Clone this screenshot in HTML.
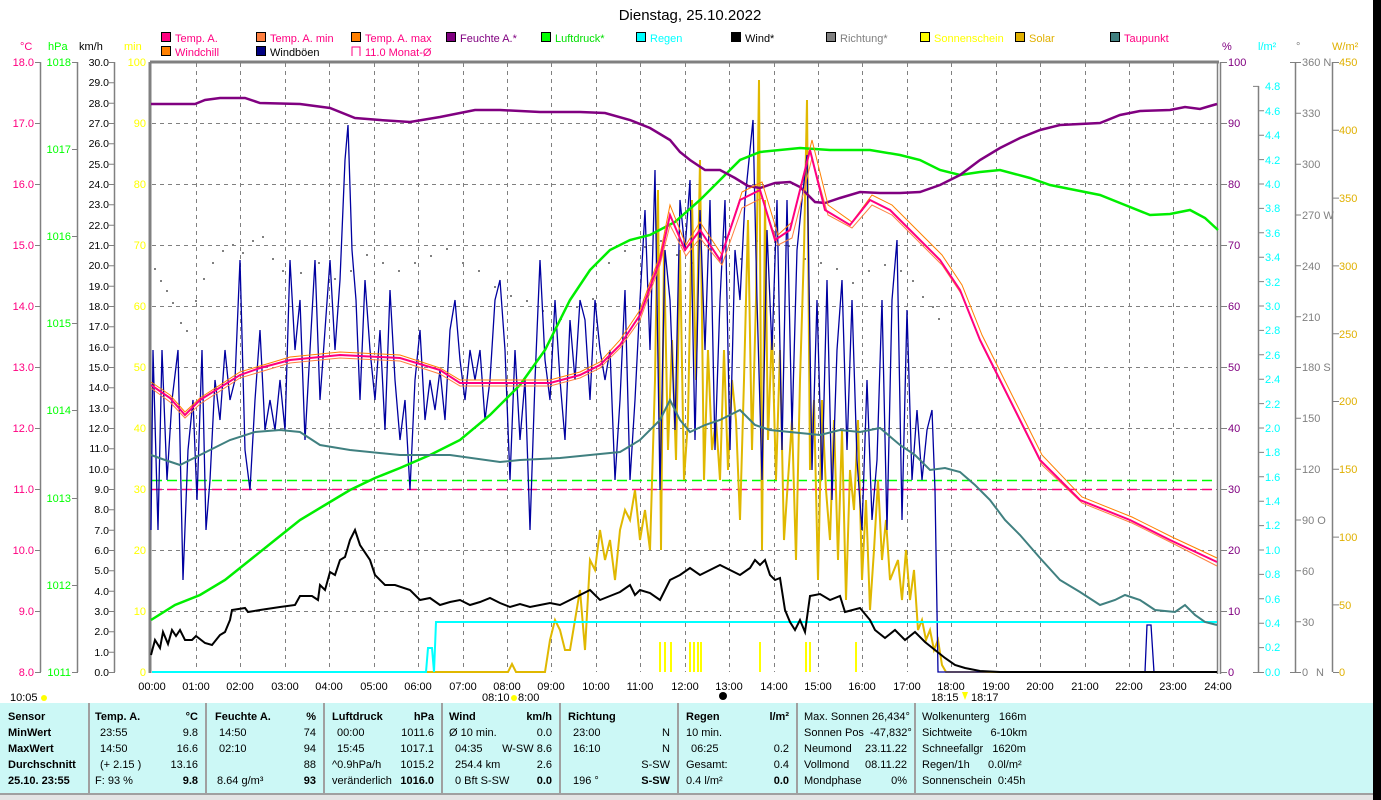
<!DOCTYPE html>
<html><head><meta charset="utf-8"><style>
body{margin:0;width:1381px;height:800px;overflow:hidden;background:#fff;font-family:"Liberation Sans",sans-serif;position:relative}
svg{position:absolute;left:0;top:0}
#panel{position:absolute;left:0;top:703px;width:1373px;height:90px;background:#ccf8f6}
.col{position:absolute;top:0;height:90px;border-left:2px solid #a0a0a0;box-sizing:border-box}
.r{position:absolute;font-size:11px;line-height:16px;white-space:nowrap;color:#000}
.b{font-weight:bold}
#black{position:absolute;left:1373px;top:0;width:8px;height:800px;background:#000}
#status{position:absolute;left:0;top:793px;width:1373px;height:7px;background:#e4e4e4;border-top:2px solid #a0a0a0;box-sizing:border-box}
</style></head><body>
<svg width="1373" height="703" font-family="Liberation Sans, sans-serif" font-size="11">
<text x="690" y="20" font-size="15" text-anchor="middle">Dienstag, 25.10.2022</text>
<g stroke="#000" stroke-width="1">
<rect x="161.5" y="32.5" width="9" height="9" fill="#ff0080"/>
<rect x="256.5" y="32.5" width="9" height="9" fill="#ff8040"/>
<rect x="351.5" y="32.5" width="9" height="9" fill="#ff8000"/>
<rect x="446.5" y="32.5" width="9" height="9" fill="#800080"/>
<rect x="541.5" y="32.5" width="9" height="9" fill="#00ff00"/>
<rect x="636.5" y="32.5" width="9" height="9" fill="#00ffff"/>
<rect x="731.5" y="32.5" width="9" height="9" fill="#000"/>
<rect x="826.5" y="32.5" width="9" height="9" fill="#808080"/>
<rect x="920.5" y="32.5" width="9" height="9" fill="#ffff00"/>
<rect x="1015.5" y="32.5" width="9" height="9" fill="#e0b000"/>
<rect x="1110.5" y="32.5" width="9" height="9" fill="#408080"/>
<rect x="161.5" y="46.5" width="9" height="9" fill="#ff8000"/>
<rect x="256.5" y="46.5" width="9" height="9" fill="#000080"/>
</g>
<path d="M352 56V47H360V56" fill="none" stroke="#ff0080"/>
<g>
<text x="175" y="42" fill="#ff0080">Temp. A.</text>
<text x="270" y="42" fill="#ff0080">Temp. A. min</text>
<text x="365" y="42" fill="#ff0080">Temp. A. max</text>
<text x="460" y="42" fill="#800080">Feuchte A.*</text>
<text x="555" y="42" fill="#00e000">Luftdruck*</text>
<text x="650" y="42" fill="#00ffff">Regen</text>
<text x="745" y="42" fill="#000">Wind*</text>
<text x="840" y="42" fill="#808080">Richtung*</text>
<text x="934" y="42" fill="#ffff00">Sonnenschein</text>
<text x="1029" y="42" fill="#e0b000">Solar</text>
<text x="1124" y="42" fill="#ff0080">Taupunkt</text>
<text x="175" y="56" fill="#ff0080">Windchill</text>
<text x="270" y="56" fill="#000">Windböen</text>
<text x="365" y="56" fill="#ff0080">11.0 Monat-Ø</text>
</g>
<text x="20" y="50" fill="#ff0080">°C</text>
<text x="48" y="50" fill="#00ff00">hPa</text>
<text x="79" y="50" fill="#000">km/h</text>
<text x="124" y="50" fill="#ffff00">min</text>
<text x="1222" y="50" fill="#800080">%</text>
<text x="1258" y="50" fill="#00ffff">l/m²</text>
<text x="1296" y="50" fill="#808080">°</text>
<text x="1332" y="50" fill="#e0b000">W/m²</text>
<g stroke="#808080" stroke-dasharray="4,4" stroke-width="1">
<path d="M152 123.5H1217M152 184.5H1217M152 245.5H1217M152 306.5H1217M152 367.5H1217M152 428.5H1217M152 489.5H1217M152 550.5H1217M152 611.5H1217"/>
<path d="M196.5 63V672M240.5 63V672M285.5 63V672M329.5 63V672M374.5 63V672M418.5 63V672M463.5 63V672M507.5 63V672M551.5 63V672M596.5 63V672M640.5 63V672M685.5 63V672M729.5 63V672M774.5 63V672M818.5 63V672M862.5 63V672M907.5 63V672M951.5 63V672M996.5 63V672M1040.5 63V672M1085.5 63V672M1129.5 63V672M1173.5 63V672"/>
</g>
<g stroke="#808080" fill="none">
<path d="M150 62V673" stroke-width="3"/>
<path d="M150 62H1219" stroke-width="3"/>
<path d="M1217.5 62V674M1220.5 62V674" stroke-width="1.5"/>
<path d="M40.5 62V672M77.5 62V672M114.5 62V672M1258.5 86V672M1295.5 62V672M1332.5 62V672" stroke-width="1.5"/>
</g>
<g stroke="#808080">
<path d="M35 62.5H41M35 123.5H41M35 184.5H41M35 245.5H41M35 306.5H41M35 367.5H41M35 428.5H41M35 489.5H41M35 550.5H41M35 611.5H41M35 672.5H41"/>
<path d="M72 62.5H78M72 149.5H78M72 236.5H78M72 323.5H78M72 410.5H78M72 498.5H78M72 585.5H78M72 672.5H78"/>
<path d="M109 62.5H115M109 82.8H115M109 103.2H115M109 123.5H115M109 143.8H115M109 164.2H115M109 184.5H115M109 204.8H115M109 225.2H115M109 245.5H115M109 265.8H115M109 286.2H115M109 306.5H115M109 326.8H115M109 347.2H115M109 367.5H115M109 387.8H115M109 408.2H115M109 428.5H115M109 448.8H115M109 469.2H115M109 489.5H115M109 509.8H115M109 530.2H115M109 550.5H115M109 570.8H115M109 591.2H115M109 611.5H115M109 631.8H115M109 652.2H115M109 672.5H115"/>
<path d="M1221 62.5H1227M1221 123.5H1227M1221 184.5H1227M1221 245.5H1227M1221 306.5H1227M1221 367.5H1227M1221 428.5H1227M1221 489.5H1227M1221 550.5H1227M1221 611.5H1227M1221 672.5H1227"/>
<path d="M1253 86.4H1259M1259 110.8H1264M1259 135.2H1264M1259 159.6H1264M1259 184H1264M1259 208.4H1264M1259 232.8H1264M1259 257.2H1264M1259 281.6H1264M1259 306H1264M1259 330.4H1264M1259 354.8H1264M1259 379.2H1264M1259 403.6H1264M1259 428H1264M1259 452.4H1264M1259 476.8H1264M1259 501.2H1264M1259 525.6H1264M1259 550H1264M1259 574.4H1264M1259 598.8H1264M1259 623.2H1264M1259 647.6H1264M1253 672.5H1264"/>
<path d="M1290 62.5H1301M1296 113.3H1301M1296 164.2H1301M1296 215H1301M1296 265.8H1301M1296 316.7H1301M1296 367.5H1301M1296 418.3H1301M1296 469.2H1301M1296 520H1301M1296 570.8H1301M1296 621.7H1301M1290 672.5H1301"/>
<path d="M1333 62.5H1339M1333 130.3H1339M1333 198.1H1339M1333 265.9H1339M1333 333.7H1339M1333 401.5H1339M1333 469.3H1339M1333 537.1H1339M1333 604.9H1339M1333 672.5H1339"/>
</g>
<g fill="#ff0080" text-anchor="end">
<text x="34" y="66">18.0</text><text x="34" y="127">17.0</text><text x="34" y="188">16.0</text><text x="34" y="249">15.0</text><text x="34" y="310">14.0</text><text x="34" y="371">13.0</text><text x="34" y="432">12.0</text><text x="34" y="493">11.0</text><text x="34" y="554">10.0</text><text x="34" y="615">9.0</text><text x="34" y="676">8.0</text>
</g>
<g fill="#00ff00" text-anchor="end">
<text x="71" y="66">1018</text><text x="71" y="153">1017</text><text x="71" y="240">1016</text><text x="71" y="327">1015</text><text x="71" y="414">1014</text><text x="71" y="502">1013</text><text x="71" y="589">1012</text><text x="71" y="676">1011</text>
</g>
<g fill="#000" text-anchor="end" font-size="10.5">
<text x="109" y="66">30.0</text><text x="109" y="86">29.0</text><text x="109" y="107">28.0</text><text x="109" y="127">27.0</text><text x="109" y="147">26.0</text><text x="109" y="168">25.0</text><text x="109" y="188">24.0</text><text x="109" y="208">23.0</text><text x="109" y="229">22.0</text><text x="109" y="249">21.0</text><text x="109" y="269">20.0</text><text x="109" y="290">19.0</text><text x="109" y="310">18.0</text><text x="109" y="330">17.0</text><text x="109" y="351">16.0</text><text x="109" y="371">15.0</text><text x="109" y="391">14.0</text><text x="109" y="412">13.0</text><text x="109" y="432">12.0</text><text x="109" y="452">11.0</text><text x="109" y="473">10.0</text><text x="109" y="493">9.0</text><text x="109" y="513">8.0</text><text x="109" y="534">7.0</text><text x="109" y="554">6.0</text><text x="109" y="574">5.0</text><text x="109" y="595">4.0</text><text x="109" y="615">3.0</text><text x="109" y="635">2.0</text><text x="109" y="656">1.0</text><text x="109" y="676">0.0</text>
</g>
<g fill="#ffff00" text-anchor="end">
<text x="146" y="66">100</text><text x="146" y="127">90</text><text x="146" y="188">80</text><text x="146" y="249">70</text><text x="146" y="310">60</text><text x="146" y="371">50</text><text x="146" y="432">40</text><text x="146" y="493">30</text><text x="146" y="554">20</text><text x="146" y="615">10</text><text x="146" y="676">0</text>
</g>
<g fill="#800080">
<text x="1228" y="66">100</text><text x="1228" y="127">90</text><text x="1228" y="188">80</text><text x="1228" y="249">70</text><text x="1228" y="310">60</text><text x="1228" y="371">50</text><text x="1228" y="432">40</text><text x="1228" y="493">30</text><text x="1228" y="554">20</text><text x="1228" y="615">10</text><text x="1228" y="676">0</text>
</g>
<g fill="#00ffff">
<text x="1265" y="90">4.8</text><text x="1265" y="115">4.6</text><text x="1265" y="139">4.4</text><text x="1265" y="164">4.2</text><text x="1265" y="188">4.0</text><text x="1265" y="212">3.8</text><text x="1265" y="237">3.6</text><text x="1265" y="261">3.4</text><text x="1265" y="286">3.2</text><text x="1265" y="310">3.0</text><text x="1265" y="334">2.8</text><text x="1265" y="359">2.6</text><text x="1265" y="383">2.4</text><text x="1265" y="408">2.2</text><text x="1265" y="432">2.0</text><text x="1265" y="456">1.8</text><text x="1265" y="481">1.6</text><text x="1265" y="505">1.4</text><text x="1265" y="529">1.2</text><text x="1265" y="554">1.0</text><text x="1265" y="578">0.8</text><text x="1265" y="603">0.6</text><text x="1265" y="627">0.4</text><text x="1265" y="651">0.2</text><text x="1265" y="676">0.0</text>
</g>
<g fill="#808080">
<text x="1302" y="66">360 N</text><text x="1302" y="117">330</text><text x="1302" y="168">300</text><text x="1302" y="219">270 W</text><text x="1302" y="270">240</text><text x="1302" y="321">210</text><text x="1302" y="371">180 S</text><text x="1302" y="422">150</text><text x="1302" y="473">120</text><text x="1302" y="524">90 O</text><text x="1302" y="575">60</text><text x="1302" y="626">30</text><text x="1302" y="676">0</text><text x="1316" y="676">N</text>
</g>
<g fill="#e0b000">
<text x="1339" y="66">450</text><text x="1339" y="134">400</text><text x="1339" y="202">350</text><text x="1339" y="270">300</text><text x="1339" y="338">250</text><text x="1339" y="405">200</text><text x="1339" y="473">150</text><text x="1339" y="541">100</text><text x="1339" y="609">50</text><text x="1339" y="676">0</text>
</g>
<g fill="#000" text-anchor="middle">
<text x="152" y="690">00:00</text><text x="196" y="690">01:00</text><text x="240" y="690">02:00</text><text x="285" y="690">03:00</text><text x="329" y="690">04:00</text><text x="374" y="690">05:00</text><text x="418" y="690">06:00</text><text x="463" y="690">07:00</text><text x="507" y="690">08:00</text><text x="551" y="690">09:00</text><text x="596" y="690">10:00</text><text x="640" y="690">11:00</text><text x="685" y="690">12:00</text><text x="729" y="690">13:00</text><text x="774" y="690">14:00</text><text x="818" y="690">15:00</text><text x="862" y="690">16:00</text><text x="907" y="690">17:00</text><text x="951" y="690">18:00</text><text x="996" y="690">19:00</text><text x="1040" y="690">20:00</text><text x="1085" y="690">21:00</text><text x="1129" y="690">22:00</text><text x="1173" y="690">23:00</text><text x="1218" y="690">24:00</text>
</g>
<text x="10" y="701">10:05</text><circle cx="44" cy="698" r="3" fill="#ffff00"/>
<text x="482" y="701">08:10</text><circle cx="514" cy="698" r="3" fill="#ffff00"/><text x="518" y="701">8:00</text>
<circle cx="723" cy="696" r="4" fill="#000"/>
<text x="931" y="701">18:15</text><path d="M962 692L968 692L965 700Z" fill="#ffff00"/><text x="971" y="701">18:17</text>
<path d="M152 480.5H1217" stroke="#00ff00" stroke-dasharray="10,5" stroke-width="1.5"/>
<path d="M152 489.5H1217" stroke="#ff0080" stroke-dasharray="10,5" stroke-width="1.5"/>
<g fill="#808080">
<rect x="154" y="268" width="2" height="2"/><rect x="160" y="280" width="2" height="2"/><rect x="166" y="290" width="2" height="2"/><rect x="172" y="302" width="2" height="2"/><rect x="180" y="322" width="2" height="2"/><rect x="186" y="330" width="2" height="2"/><rect x="195" y="300" width="2" height="2"/><rect x="203" y="278" width="2" height="2"/><rect x="212" y="262" width="2" height="2"/><rect x="222" y="250" width="2" height="2"/><rect x="232" y="244" width="2" height="2"/><rect x="242" y="252" width="2" height="2"/><rect x="252" y="240" width="2" height="2"/><rect x="262" y="236" width="2" height="2"/><rect x="272" y="258" width="2" height="2"/><rect x="282" y="270" width="2" height="2"/><rect x="300" y="272" width="2" height="2"/><rect x="318" y="262" width="2" height="2"/><rect x="334" y="278" width="2" height="2"/><rect x="350" y="270" width="2" height="2"/><rect x="366" y="254" width="2" height="2"/><rect x="382" y="262" width="2" height="2"/><rect x="398" y="270" width="2" height="2"/><rect x="414" y="262" width="2" height="2"/><rect x="430" y="255" width="2" height="2"/><rect x="446" y="248" width="2" height="2"/><rect x="462" y="262" width="2" height="2"/><rect x="478" y="270" width="2" height="2"/><rect x="494" y="286" width="2" height="2"/><rect x="510" y="295" width="2" height="2"/><rect x="526" y="300" width="2" height="2"/><rect x="542" y="310" width="2" height="2"/><rect x="560" y="318" width="2" height="2"/><rect x="576" y="306" width="2" height="2"/><rect x="592" y="298" width="2" height="2"/><rect x="608" y="262" width="2" height="2"/><rect x="624" y="250" width="2" height="2"/><rect x="644" y="246" width="2" height="2"/><rect x="660" y="240" width="2" height="2"/><rect x="676" y="254" width="2" height="2"/><rect x="692" y="262" width="2" height="2"/><rect x="708" y="248" width="2" height="2"/><rect x="724" y="236" width="2" height="2"/><rect x="740" y="258" width="2" height="2"/><rect x="756" y="240" width="2" height="2"/><rect x="772" y="230" width="2" height="2"/><rect x="788" y="245" width="2" height="2"/><rect x="804" y="258" width="2" height="2"/><rect x="820" y="262" width="2" height="2"/><rect x="836" y="268" width="2" height="2"/><rect x="852" y="282" width="2" height="2"/><rect x="868" y="270" width="2" height="2"/><rect x="884" y="264" width="2" height="2"/><rect x="900" y="270" width="2" height="2"/><rect x="912" y="280" width="2" height="2"/><rect x="922" y="296" width="2" height="2"/><rect x="932" y="306" width="2" height="2"/><rect x="938" y="318" width="2" height="2"/>
</g>
<polyline fill="none" stroke="#e0b800" stroke-width="2" points="152,672 508,672 512,664 516,672 545,672 550,640 555,620 560,630 565,650 570,650 575,620 580,590 585,650 590,560 595,570 600,530 605,560 610,540 615,580 620,530 625,510 630,520 635,490 640,540 645,510 650,550 655,380 658,190 661,550 664,250 668,450 672,340 676,460 680,250 684,480 688,420 692,200 696,380 700,160 704,480 708,350 712,450 716,420 720,480 724,350 728,470 732,380 736,420 740,520 744,380 748,220 752,450 756,300 759,80 762,550 765,200 768,440 772,330 776,480 780,350 784,540 788,480 792,420 796,560 800,380 804,250 807,100 810,470 814,400 818,580 822,400 826,490 830,540 834,420 838,560 842,430 846,600 850,470 854,510 858,420 862,580 866,500 870,610 874,550 878,480 882,560 886,520 890,580 894,570 898,560 902,600 906,550 910,600 914,570 918,630 922,620 926,640 930,630 934,650 938,640 942,665 946,672 1217,672"/>
<path d="M660 642V672M665 642V672M671 642V672M690 642V672M694 642V672M698 642V672M701 642V672M760 642V672M806 642V672M810 642V672M856 642V672" stroke="#ffff00" stroke-width="2"/>
<polyline fill="none" stroke="#0000a0" stroke-width="1.3" points="151,530 153,350 158,530 162,350 167,480 172,400 178,350 183,580 188,450 193,400 197,500 202,350 206,530 210,480 215,380 220,420 225,350 230,400 235,380 240,260 245,450 250,490 255,400 260,330 265,430 270,400 275,430 280,380 285,430 290,260 295,350 300,300 305,440 310,350 315,260 320,400 325,330 330,260 335,350 340,280 345,160 348,125 352,250 356,300 360,400 365,280 370,350 375,400 380,330 385,430 390,290 395,380 400,440 405,400 410,490 415,380 420,330 425,420 430,380 435,410 440,370 445,420 450,330 455,300 460,360 465,400 470,350 475,380 480,350 485,420 490,380 495,300 500,280 505,350 510,480 515,350 520,440 525,380 530,530 535,380 540,260 545,360 550,400 555,300 560,380 565,440 570,320 575,380 580,300 585,320 590,400 595,300 600,350 605,380 610,350 615,480 620,400 625,290 630,480 635,400 640,300 645,210 650,350 655,170 660,490 665,250 670,300 675,430 680,200 685,250 690,180 695,440 700,210 705,350 710,200 715,450 720,300 725,200 730,450 735,250 740,300 745,200 750,150 753,120 757,300 762,480 767,230 772,350 777,200 782,450 787,200 792,430 797,250 802,200 807,155 812,470 817,300 822,480 827,280 832,500 837,350 842,280 847,450 852,300 857,460 862,530 867,380 872,520 877,460 882,300 887,530 892,300 897,240 902,520 907,310 912,480 917,410 922,480 927,430 932,410 935,490 938,672 1145,672 1147,625 1151,625 1154,672 1217,672"/>
<polyline fill="none" stroke="#00ffff" stroke-width="2" points="152,672 426,672 428,648 432,648 434,672 436,622 1217,622"/>
<polyline fill="none" stroke="#00ee00" stroke-width="2.5" points="151,620 175,605 200,595 225,580 250,560 275,540 300,520 325,505 350,490 375,478 400,468 430,455 460,440 490,415 520,385 545,350 570,300 590,270 610,250 630,240 650,235 675,222 700,200 720,180 740,160 760,152 800,148 830,150 870,150 900,155 920,160 940,170 960,175 980,172 1000,170 1030,178 1050,185 1075,190 1100,195 1125,205 1150,215 1170,214 1190,210 1205,218 1218,230"/>
<polyline fill="none" stroke="#800080" stroke-width="2.5" points="151,104 195,104 205,100 220,98 245,98 260,103 300,104 330,108 355,118 380,120 410,122 440,117 475,110 500,110 540,112 580,112 605,113 630,120 650,128 670,140 680,152 690,160 705,170 720,170 735,178 748,186 760,188 775,183 790,182 800,187 815,202 825,203 840,198 860,192 880,193 900,193 920,192 940,185 960,175 980,160 1000,148 1020,138 1040,130 1060,125 1080,124 1100,123 1120,115 1140,111 1170,110 1185,107 1200,109 1210,106 1217,104"/>
<polyline fill="none" stroke="#408080" stroke-width="2" points="151,455 165,460 180,465 200,455 230,440 255,432 280,430 300,432 320,445 350,450 400,455 450,455 500,462 520,460 560,458 590,455 620,452 640,440 660,420 670,400 680,420 690,432 705,425 720,420 740,410 755,425 770,430 790,432 820,435 840,430 860,432 880,428 900,445 915,455 930,470 945,468 960,472 975,485 990,500 1005,520 1020,535 1040,558 1060,580 1080,592 1100,605 1115,600 1125,595 1140,600 1155,610 1175,612 1185,605 1195,615 1205,622 1217,625"/>
<polyline fill="none" stroke="#ff8000" stroke-width="1" points="151,382 170,395 185,412 200,398 240,372 260,366 290,357 340,352 400,355 440,368 460,380 550,380 580,372 600,362 620,340 640,310 660,255 670,205 686,245 700,222 722,255 742,192 762,182 778,235 792,222 812,140 828,205 852,222 872,195 892,205 912,225 942,255 962,285 982,335 1002,375 1042,455 1082,497 1132,517 1172,537 1217,558"/>
<polyline fill="none" stroke="#ff8040" stroke-width="1" points="151,388 170,402 185,418 200,404 240,378 260,372 290,363 340,358 400,361 440,374 460,386 550,386 580,378 600,368 620,348 640,320 660,265 670,225 686,256 700,238 722,265 742,208 762,198 778,245 792,238 812,158 828,215 852,228 872,205 892,215 912,235 942,265 962,295 982,345 1002,385 1042,465 1082,503 1132,523 1172,543 1217,566"/>
<polyline fill="none" stroke="#ff0080" stroke-width="2" points="151,385 170,398 185,415 200,400 240,375 260,368 290,360 340,355 400,358 440,370 460,383 550,383 580,375 600,365 620,345 640,315 660,260 670,215 685,250 700,230 720,260 740,200 760,190 775,240 790,230 810,150 825,210 850,225 870,200 890,210 910,230 940,260 960,290 980,340 1000,380 1040,460 1080,500 1130,520 1170,540 1217,562"/>
<polyline fill="none" stroke="#000" stroke-width="2" points="151,655 155,640 160,648 163,632 168,644 172,630 176,636 180,630 185,640 192,640 196,636 205,643 212,645 220,635 225,632 230,620 232,610 245,608 248,612 260,610 280,607 295,605 300,596 312,596 318,600 320,585 325,590 330,572 335,575 340,560 345,557 350,540 355,530 360,545 370,560 375,575 385,585 395,585 410,590 420,600 430,598 440,605 450,602 460,600 470,605 480,602 490,598 500,603 510,607 520,604 530,607 540,605 550,603 560,605 570,600 580,595 590,590 600,600 610,596 620,592 630,585 635,595 640,590 650,593 660,600 670,580 680,575 690,568 700,575 710,570 720,565 730,570 740,575 750,568 755,560 760,565 765,560 770,575 775,580 780,578 785,610 790,622 795,630 800,620 805,632 810,596 820,594 830,600 840,596 845,612 860,608 870,620 875,630 885,638 895,630 905,640 915,632 925,642 935,650 945,658 955,665 965,668 980,671 1000,672 1217,672"/>
</svg>
<div id="panel">
<div class="r b" style="left:8px;top:6px">Sensor</div>
<div class="r b" style="left:8px;top:22px">MinWert</div>
<div class="r b" style="left:8px;top:38px">MaxWert</div>
<div class="r b" style="left:8px;top:54px">Durchschnitt</div>
<div class="r b" style="left:8px;top:70px">25.10. 23:55</div>
<div class="col" style="left:88px;width:117px">
<div class="r b" style="left:5px;top:6px">Temp. A.</div><div class="r b" style="right:7px;top:6px">°C</div>
<div class="r" style="left:10px;top:22px">23:55</div><div class="r" style="right:7px;top:22px">9.8</div>
<div class="r" style="left:10px;top:38px">14:50</div><div class="r" style="right:7px;top:38px">16.6</div>
<div class="r" style="left:10px;top:54px">(+ 2.15 )</div><div class="r" style="right:7px;top:54px">13.16</div>
<div class="r" style="left:5px;top:70px">F: 93 %</div><div class="r b" style="right:7px;top:70px">9.8</div>
</div>
<div class="col" style="left:205px;width:118px">
<div class="r b" style="left:8px;top:6px">Feuchte A.</div><div class="r b" style="right:7px;top:6px">%</div>
<div class="r" style="left:12px;top:22px">14:50</div><div class="r" style="right:7px;top:22px">74</div>
<div class="r" style="left:12px;top:38px">02:10</div><div class="r" style="right:7px;top:38px">94</div>
<div class="r" style="right:7px;top:54px">88</div>
<div class="r" style="left:10px;top:70px">8.64 g/m³</div><div class="r b" style="right:7px;top:70px">93</div>
</div>
<div class="col" style="left:323px;width:118px">
<div class="r b" style="left:7px;top:6px">Luftdruck</div><div class="r b" style="right:7px;top:6px">hPa</div>
<div class="r" style="left:12px;top:22px">00:00</div><div class="r" style="right:7px;top:22px">1011.6</div>
<div class="r" style="left:12px;top:38px">15:45</div><div class="r" style="right:7px;top:38px">1017.1</div>
<div class="r" style="left:7px;top:54px">^0.9hPa/h</div><div class="r" style="right:7px;top:54px">1015.2</div>
<div class="r" style="left:7px;top:70px">veränderlich</div><div class="r b" style="right:7px;top:70px">1016.0</div>
</div>
<div class="col" style="left:441px;width:118px">
<div class="r b" style="left:6px;top:6px">Wind</div><div class="r b" style="right:7px;top:6px">km/h</div>
<div class="r" style="left:6px;top:22px">Ø 10 min.</div><div class="r" style="right:7px;top:22px">0.0</div>
<div class="r" style="left:12px;top:38px">04:35</div><div class="r" style="right:7px;top:38px">W-SW 8.6</div>
<div class="r" style="left:12px;top:54px">254.4 km</div><div class="r" style="right:7px;top:54px">2.6</div>
<div class="r" style="left:12px;top:70px">0 Bft S-SW</div><div class="r b" style="right:7px;top:70px">0.0</div>
</div>
<div class="col" style="left:559px;width:118px">
<div class="r b" style="left:7px;top:6px">Richtung</div>
<div class="r" style="left:12px;top:22px">23:00</div><div class="r" style="right:7px;top:22px">N</div>
<div class="r" style="left:12px;top:38px">16:10</div><div class="r" style="right:7px;top:38px">N</div>
<div class="r" style="right:7px;top:54px">S-SW</div>
<div class="r" style="left:12px;top:70px">196 °</div><div class="r b" style="right:7px;top:70px">S-SW</div>
</div>
<div class="col" style="left:677px;width:119px">
<div class="r b" style="left:7px;top:6px">Regen</div><div class="r b" style="right:7px;top:6px">l/m²</div>
<div class="r" style="left:7px;top:22px">10 min.</div>
<div class="r" style="left:12px;top:38px">06:25</div><div class="r" style="right:7px;top:38px">0.2</div>
<div class="r" style="left:7px;top:54px">Gesamt:</div><div class="r" style="right:7px;top:54px">0.4</div>
<div class="r" style="left:7px;top:70px">0.4 l/m²</div><div class="r b" style="right:7px;top:70px">0.0</div>
</div>
<div class="col" style="left:796px;width:118px">
<div class="r" style="left:6px;top:6px">Max. Sonnen 26,434°</div>
<div class="r" style="left:6px;top:22px">Sonnen Pos &nbsp;-47,832°</div>
<div class="r" style="left:6px;top:38px">Neumond</div><div class="r" style="right:7px;top:38px">23.11.22</div>
<div class="r" style="left:6px;top:54px">Vollmond</div><div class="r" style="right:7px;top:54px">08.11.22</div>
<div class="r" style="left:6px;top:70px">Mondphase</div><div class="r" style="right:7px;top:70px">0%</div>
</div>
<div class="col" style="left:914px;width:459px">
<div class="r" style="left:6px;top:6px">Wolkenunterg &nbsp;&nbsp;166m</div>
<div class="r" style="left:6px;top:22px">Sichtweite &nbsp;&nbsp;&nbsp;&nbsp;&nbsp;6-10km</div>
<div class="r" style="left:6px;top:38px">Schneefallgr &nbsp;&nbsp;1620m</div>
<div class="r" style="left:6px;top:54px">Regen/1h &nbsp;&nbsp;&nbsp;&nbsp;&nbsp;0.0l/m²</div>
<div class="r" style="left:6px;top:70px">Sonnenschein &nbsp;0:45h</div>
</div>
</div>
<div id="status"></div>
<div id="black"></div>
</body></html>
